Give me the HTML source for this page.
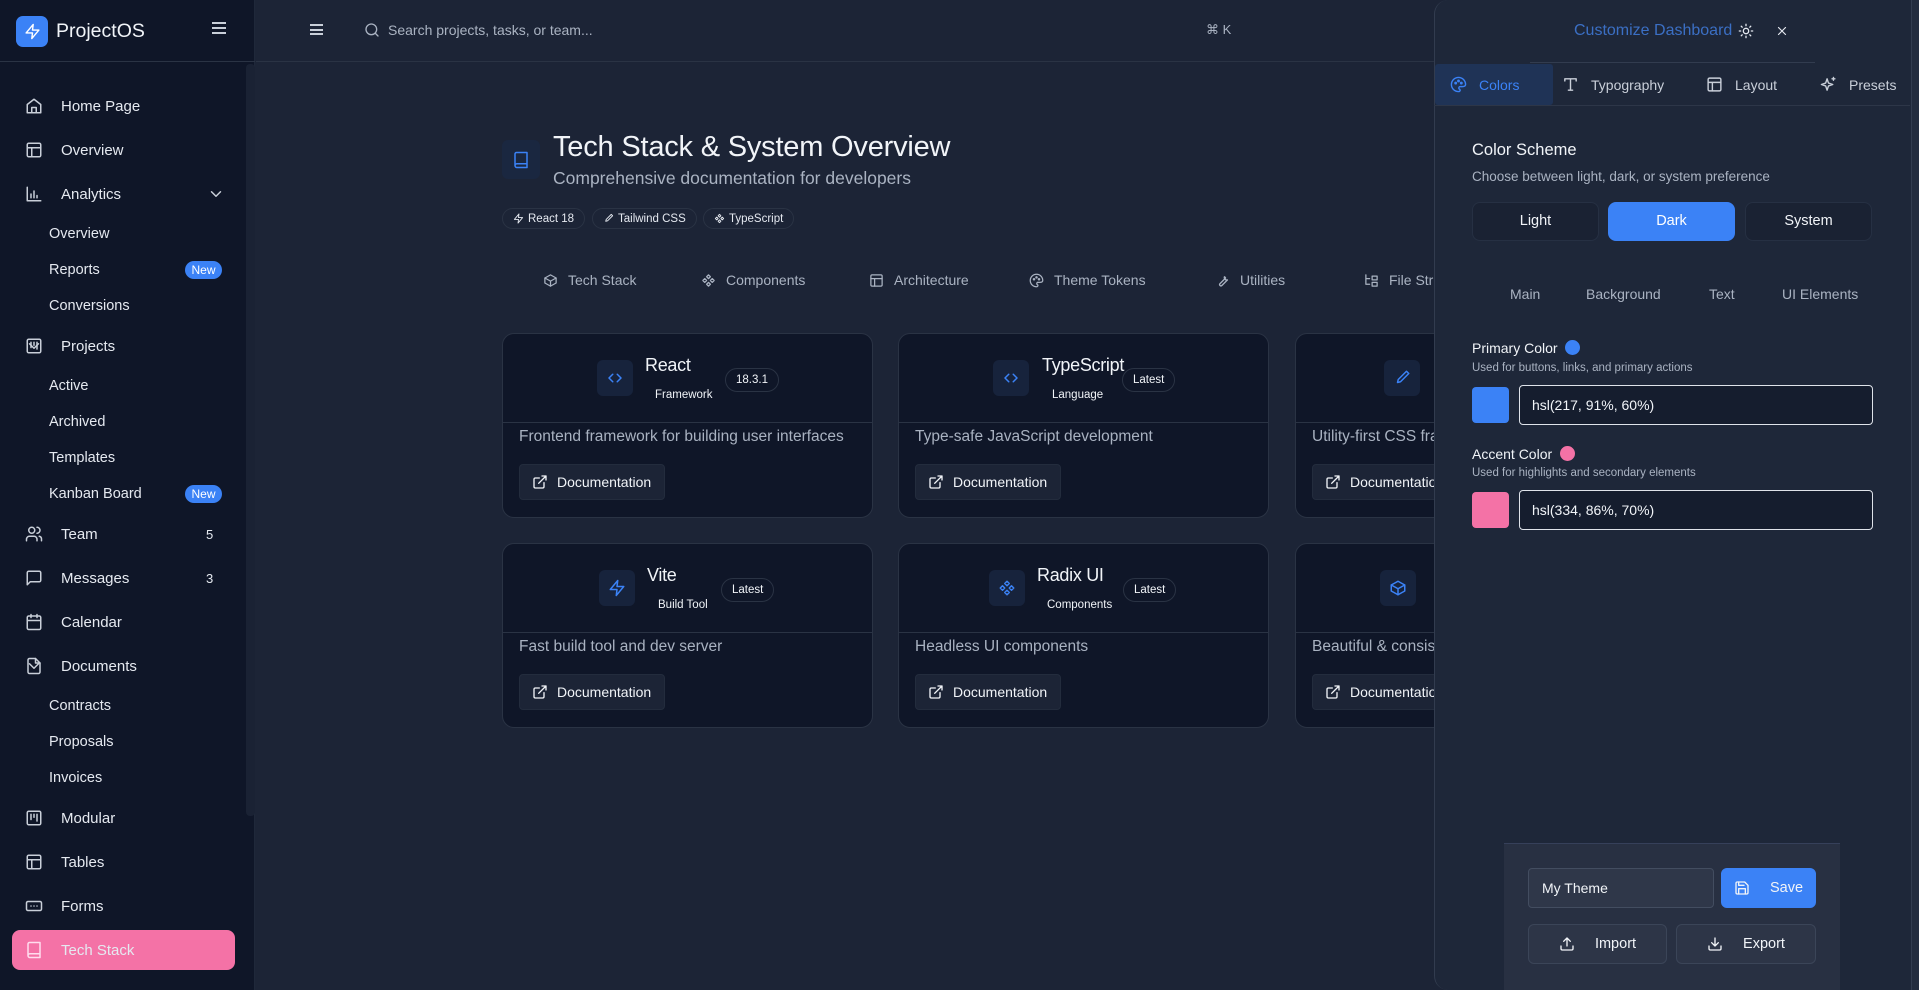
<!DOCTYPE html>
<html><head><meta charset="utf-8"><style>
*{box-sizing:border-box;margin:0;padding:0}
body{width:1919px;height:990px;overflow:hidden;background:#1c2436;font-family:"Liberation Sans",sans-serif;color:#e5e9f0;position:relative}
.a{position:absolute}
svg{fill:none;stroke:currentColor;stroke-width:2;stroke-linecap:round;stroke-linejoin:round}
.sb{left:0;top:0;width:255px;height:990px;background:#0f1628;border-right:1px solid #1f283a}
.ni{position:absolute;left:0;width:246px;height:40px;display:flex;align-items:center;font-size:15px;color:#e5e9f0}
.ni svg{position:absolute;left:25px;width:18px;height:18px;color:#c9cfd9}
.ni .l{position:absolute;left:61px}
.ni.sub .l{left:49px;font-size:14.5px}
.badge{position:absolute;left:185px;width:37px;height:18px;border-radius:9px;background:#3b82f6;color:#fff;font-size:12px;text-align:center;line-height:18px}
.cnt{position:absolute;left:206px;font-size:13px}
.chev{position:absolute;left:207px;width:14px;height:14px;color:#c9cfd9}
.card{position:absolute;width:371px;height:185px;background:#0f1628;border:1px solid #2a3344;border-radius:12px;overflow:hidden}
.card .hd{height:89px;border-bottom:1px solid #2a3344;position:relative}
.ib{position:absolute;width:36px;height:36px;border-radius:6px;background:#17233c;color:#3b82f6;display:flex;align-items:center;justify-content:center}
.ib svg{width:18px;height:18px}
.card .nm{position:absolute;font-size:18px;color:#f1f4f8;letter-spacing:-0.3px}
.card .ty{position:absolute;font-size:11.5px;color:#f1f4f8}
.card .ver{position:absolute;height:24px;padding:0 10px;border:1px solid #2a3344;border-radius:12px;font-size:11.5px;line-height:22px;color:#f1f4f8}
.card .ds{position:absolute;left:16px;top:94px;font-size:15.5px;color:#a9b2c1;white-space:nowrap}
.card .doc{position:absolute;left:16px;top:130px;height:36px;width:146px;background:#1c2436;border:1px solid #232c3d;border-radius:4px;font-size:14px;color:#f1f4f8;display:flex;align-items:center;padding-left:12px;white-space:nowrap}
.card .doc svg{width:16px;height:16px;margin-right:9px}
.tab{position:absolute;top:272px;font-size:14px;color:#aab3c2;display:flex;align-items:center}
.tab svg{width:15px;height:15px;margin-right:10px}
.pill{position:absolute;top:208px;height:21px;border:1px solid #2a3344;border-radius:11px;font-size:11.5px;color:#e5e9f0;display:flex;align-items:center;padding:0 10px;gap:4px}
.pill svg{width:11px;height:11px}
.pn{left:1434px;top:0;width:485px;height:990px;background:#1e2739;border-left:1px solid #323c4f;border-radius:14px 0 0 14px}
.ptab{position:absolute;top:64px;height:41px;display:flex;align-items:center;font-size:14px;color:#c9cfd9}
.ptab svg{width:17px;height:17px;margin-right:12px}
.btn3{position:absolute;top:202px;width:127px;height:39px;border:1px solid #263043;border-radius:8px;background:#1a2233;font-size:14.5px;text-align:center;line-height:37px;color:#f1f4f8}
.st{position:absolute;top:286px;font-size:14px;color:#aab3c2}
.inp{position:absolute;left:1519px;width:354px;height:40px;border:1px solid #dfe3ea;border-radius:4px;font-size:14px;line-height:38px;padding-left:12px;color:#f1f4f8;background:#151d2e}
.sw{position:absolute;left:1472px;width:37px;height:36px;border-radius:4px}
.ob{position:absolute;height:40px;border:1px solid #3b4558;border-radius:6px;background:#2d3547;font-size:14.5px;color:#f1f4f8;display:flex;align-items:center;justify-content:center}
.ob svg{width:16px;height:16px;margin-right:20px}
</style></head><body>

<div class="a sb">
  <div class="a" style="left:0;top:0;width:255px;height:62px;border-bottom:1px solid #2a3344"></div>
  <div class="a" style="left:16px;top:16px;width:32px;height:31px;border-radius:7px;background:#3b82f6;color:#fff;display:flex;align-items:center;justify-content:center"><svg style="width:17px;height:17px" viewBox="0 0 24 24"><path d="M13 2 3 14h9l-1 8 10-12h-9l1-8z"/></svg></div>
  <div class="a" style="left:56px;top:20px;font-size:19.5px;color:#f1f4f8">ProjectOS</div>
  <div class="a" style="left:212px;top:22px;width:14px;height:12px;border-top:2px solid #c9cfd9;border-bottom:2px solid #c9cfd9"><div style="margin-top:3px;border-top:2px solid #c9cfd9"></div></div>
  <div class="a" style="left:246px;top:64px;width:9px;height:752px;background:#1a2234;border-radius:4px"></div>

  <div class="ni" style="top:86px"><svg viewBox="0 0 24 24"><path d="M3 10 12 3l9 7v11H3z"/><path d="M9 21v-7h6v7"/></svg><span class="l">Home Page</span></div>
  <div class="ni" style="top:130px"><svg viewBox="0 0 24 24"><rect x="3" y="3" width="18" height="18" rx="2"/><path d="M3 9h18M9 21V9"/></svg><span class="l">Overview</span></div>
  <div class="ni" style="top:174px"><svg viewBox="0 0 24 24"><path d="M3 3v18h18M8 17v-5M12 17V8M16 17v-3"/></svg><span class="l">Analytics</span><svg class="chev" style="left:207px" viewBox="0 0 24 24"><path d="m6 9 6 6 6-6"/></svg></div>
  <div class="ni sub" style="top:214px"><span class="l">Overview</span></div>
  <div class="ni sub" style="top:250px"><span class="l">Reports</span><span class="badge">New</span></div>
  <div class="ni sub" style="top:286px"><span class="l">Conversions</span></div>
  <div class="ni" style="top:326px"><svg viewBox="0 0 24 24"><rect x="3" y="3" width="18" height="18" rx="2"/><path d="M8 7v7M12 7v4M16 7v9"/></svg><span class="l">Projects</span><svg class="chev" viewBox="0 0 24 24"><path d="m6 9 6 6 6-6"/></svg></div>
  <div class="ni sub" style="top:366px"><span class="l">Active</span></div>
  <div class="ni sub" style="top:402px"><span class="l">Archived</span></div>
  <div class="ni sub" style="top:438px"><span class="l">Templates</span></div>
  <div class="ni sub" style="top:474px"><span class="l">Kanban Board</span><span class="badge">New</span></div>
  <div class="ni" style="top:514px"><svg viewBox="0 0 24 24"><circle cx="9" cy="7" r="4"/><path d="M2 21v-2a4 4 0 0 1 4-4h6a4 4 0 0 1 4 4v2M16 3a4 4 0 0 1 0 8M22 21v-2a4 4 0 0 0-3-4"/></svg><span class="l">Team</span><span class="cnt">5</span></div>
  <div class="ni" style="top:558px"><svg viewBox="0 0 24 24"><path d="M21 15a2 2 0 0 1-2 2H7l-4 4V5a2 2 0 0 1 2-2h14a2 2 0 0 1 2 2z"/></svg><span class="l">Messages</span><span class="cnt">3</span></div>
  <div class="ni" style="top:602px"><svg viewBox="0 0 24 24"><rect x="3" y="4" width="18" height="18" rx="2"/><path d="M16 2v4M8 2v4M3 10h18"/></svg><span class="l">Calendar</span></div>
  <div class="ni" style="top:646px"><svg viewBox="0 0 24 24"><path d="M14 2H6a2 2 0 0 0-2 2v16a2 2 0 0 0 2 2h12a2 2 0 0 0 2-2V8z"/><path d="M14 2v6h6"/></svg><span class="l">Documents</span><svg class="chev" viewBox="0 0 24 24"><path d="m6 9 6 6 6-6"/></svg></div>
  <div class="ni sub" style="top:686px"><span class="l">Contracts</span></div>
  <div class="ni sub" style="top:722px"><span class="l">Proposals</span></div>
  <div class="ni sub" style="top:758px"><span class="l">Invoices</span></div>
  <div class="ni" style="top:798px"><svg viewBox="0 0 24 24"><rect x="3" y="3" width="18" height="18" rx="2"/><path d="M8 7v7M12 7v4M16 7v9"/></svg><span class="l">Modular</span></div>
  <div class="ni" style="top:842px"><svg viewBox="0 0 24 24"><rect x="3" y="3" width="18" height="18" rx="2"/><path d="M3 9h18M9 21V9"/></svg><span class="l">Tables</span></div>
  <div class="ni" style="top:886px"><svg viewBox="0 0 24 24"><rect x="2" y="6" width="20" height="12" rx="2"/><path d="M8 12h.01M12 12h.01M16 12h.01"/></svg><span class="l">Forms</span></div>
  <div class="a" style="left:12px;top:930px;width:223px;height:40px;border-radius:8px;background:#f472a6"></div>
  <div class="ni" style="top:930px"><svg viewBox="0 0 24 24" style="color:#fde"><path d="M4 19.5V4a2 2 0 0 1 2-2h14v20H6.5a2.5 2.5 0 0 1 0-5H20"/></svg><span class="l">Tech Stack</span></div>
</div>

<div class="a" style="left:256px;top:0;width:1180px;height:62px;border-bottom:1px solid #2a3344;background:#1c2436"></div>
<div class="a" style="left:310px;top:24px;width:13px;height:11px;border-top:2px solid #c9cfd9;border-bottom:2px solid #c9cfd9"><div style="margin-top:2.5px;border-top:2px solid #c9cfd9"></div></div>
<svg class="a" style="left:364px;top:22px;width:16px;height:16px;color:#aab3c2" viewBox="0 0 24 24"><circle cx="11" cy="11" r="8"/><path d="m21 21-4.3-4.3"/></svg>
<div class="a" style="left:388px;top:22px;font-size:14px;color:#aab3c2">Search projects, tasks, or team...</div>
<div class="a" style="left:1206px;top:22px;font-size:13px;color:#aab3c2">⌘ K</div>

<div class="ib" style="left:502px;top:140px;width:38px;height:39px;background:#1a2740"><svg viewBox="0 0 24 24"><path d="M4 19.5V4a2 2 0 0 1 2-2h14v20H6.5a2.5 2.5 0 0 1 0-5H20"/></svg></div>
<div class="a" style="left:553px;top:131px;font-size:29px;color:#f1f4f8;letter-spacing:-0.2px">Tech Stack &amp; System Overview</div>
<div class="a" style="left:553px;top:168px;font-size:17.5px;color:#aab3c2">Comprehensive documentation for developers</div>
<div class="pill" style="left:502px"><svg viewBox="0 0 24 24"><path d="M13 2 3 14h9l-1 8 10-12h-9l1-8z"/></svg>React 18</div>
<div class="pill" style="left:592px"><svg viewBox="0 0 24 24"><path d="M18 3l3 3-11 11-4 1 1-4z"/></svg>Tailwind CSS</div>
<div class="pill" style="left:703px"><svg viewBox="0 0 24 24"><path d="M12 3l3 3-3 3-3-3zM6 9l3 3-3 3-3-3zM18 9l3 3-3 3-3-3zM12 15l3 3-3 3-3-3z"/></svg>TypeScript</div>

<div class="tab" style="left:543px"><svg viewBox="0 0 24 24"><path d="M21 8 12 3 3 8v8l9 5 9-5z"/><path d="M3 8l9 5 9-5M12 13v8"/></svg>Tech Stack</div>
<div class="tab" style="left:701px"><svg viewBox="0 0 24 24"><path d="M12 3l3 3-3 3-3-3zM6 9l3 3-3 3-3-3zM18 9l3 3-3 3-3-3zM12 15l3 3-3 3-3-3z"/></svg>Components</div>
<div class="tab" style="left:869px"><svg viewBox="0 0 24 24"><rect x="3" y="3" width="18" height="18" rx="2"/><path d="M3 9h18M9 21V9"/></svg>Architecture</div>
<div class="tab" style="left:1029px"><svg viewBox="0 0 24 24"><path d="M12 22a10 10 0 1 1 10-10c0 3-3 3-5 3h-2a2 2 0 0 0-1 4 2 2 0 0 1-2 3z"/><circle cx="8" cy="10" r="1"/><circle cx="12" cy="7" r="1"/><circle cx="16" cy="10" r="1"/></svg>Theme Tokens</div>
<div class="tab" style="left:1215px"><svg viewBox="0 0 24 24"><path d="M15 6a4 4 0 0 0 5 5l-9 9a2 2 0 0 1-3-3l9-9a4 4 0 0 0-2-2z"/></svg>Utilities</div>
<div class="tab" style="left:1364px"><svg viewBox="0 0 24 24"><path d="M3 3v15h6M3 9h6M13 5h8v6h-8zM13 15h8v6h-8z"/></svg>File Structure</div>

<div class="card" style="left:502px;top:333px"><div class="hd">
<div class="ib" style="left:94px;top:26px"><svg viewBox="0 0 24 24"><path d="m9 7-5 5 5 5M15 7l5 5-5 5"/></svg></div>
<div class="nm" style="left:142px;top:21px">React</div><div class="ty" style="left:152px;top:55px">Framework</div><div class="ver" style="left:222px;top:34px">18.3.1</div></div>
<div class="ds">Frontend framework for building user interfaces</div><div class="doc"><svg viewBox="0 0 24 24"><path d="M15 3h6v6M10 14 21 3M18 13v6a2 2 0 0 1-2 2H5a2 2 0 0 1-2-2V8a2 2 0 0 1 2-2h6"/></svg>Documentation</div></div>

<div class="card" style="left:898px;top:333px"><div class="hd">
<div class="ib" style="left:94px;top:26px"><svg viewBox="0 0 24 24"><path d="m9 7-5 5 5 5M15 7l5 5-5 5"/></svg></div>
<div class="nm" style="left:143px;top:21px">TypeScript</div><div class="ty" style="left:153px;top:55px">Language</div><div class="ver" style="left:223px;top:34px">Latest</div></div>
<div class="ds">Type-safe JavaScript development</div><div class="doc"><svg viewBox="0 0 24 24"><path d="M15 3h6v6M10 14 21 3M18 13v6a2 2 0 0 1-2 2H5a2 2 0 0 1-2-2V8a2 2 0 0 1 2-2h6"/></svg>Documentation</div></div>

<div class="card" style="left:1295px;top:333px"><div class="hd">
<div class="ib" style="left:88px;top:26px"><svg viewBox="0 0 24 24"><path d="M18 3l3 3-11 11-4 1 1-4z"/></svg></div></div>
<div class="ds">Utility-first CSS framework</div><div class="doc"><svg viewBox="0 0 24 24"><path d="M15 3h6v6M10 14 21 3M18 13v6a2 2 0 0 1-2 2H5a2 2 0 0 1-2-2V8a2 2 0 0 1 2-2h6"/></svg>Documentation</div></div>

<div class="card" style="left:502px;top:543px"><div class="hd">
<div class="ib" style="left:96px;top:26px"><svg viewBox="0 0 24 24"><path d="M13 2 3 14h9l-1 8 10-12h-9l1-8z"/></svg></div>
<div class="nm" style="left:144px;top:21px">Vite</div><div class="ty" style="left:155px;top:55px">Build Tool</div><div class="ver" style="left:218px;top:34px">Latest</div></div>
<div class="ds">Fast build tool and dev server</div><div class="doc"><svg viewBox="0 0 24 24"><path d="M15 3h6v6M10 14 21 3M18 13v6a2 2 0 0 1-2 2H5a2 2 0 0 1-2-2V8a2 2 0 0 1 2-2h6"/></svg>Documentation</div></div>

<div class="card" style="left:898px;top:543px"><div class="hd">
<div class="ib" style="left:90px;top:26px"><svg viewBox="0 0 24 24"><path d="M12 3l3 3-3 3-3-3zM6 9l3 3-3 3-3-3zM18 9l3 3-3 3-3-3zM12 15l3 3-3 3-3-3z"/></svg></div>
<div class="nm" style="left:138px;top:21px">Radix UI</div><div class="ty" style="left:148px;top:55px">Components</div><div class="ver" style="left:224px;top:34px">Latest</div></div>
<div class="ds">Headless UI components</div><div class="doc"><svg viewBox="0 0 24 24"><path d="M15 3h6v6M10 14 21 3M18 13v6a2 2 0 0 1-2 2H5a2 2 0 0 1-2-2V8a2 2 0 0 1 2-2h6"/></svg>Documentation</div></div>

<div class="card" style="left:1295px;top:543px"><div class="hd">
<div class="ib" style="left:84px;top:26px"><svg viewBox="0 0 24 24"><path d="M21 8 12 3 3 8v8l9 5 9-5z"/><path d="M3 8l9 5 9-5M12 13v8"/></svg></div></div>
<div class="ds">Beautiful &amp; consistent icons</div><div class="doc"><svg viewBox="0 0 24 24"><path d="M15 3h6v6M10 14 21 3M18 13v6a2 2 0 0 1-2 2H5a2 2 0 0 1-2-2V8a2 2 0 0 1 2-2h6"/></svg>Documentation</div></div>

<div class="a pn">
  <div class="a" style="right:0;top:0;width:8px;height:990px;background:#232c3e;border-left:1px solid #323c4f"></div>
</div>
<div class="a" style="left:1574px;top:22px;font-size:16px;color:#3b6fc4">Customize Dashboard</div>
<svg class="a" style="left:1738px;top:23px;width:16px;height:16px;color:#e5e9f0" viewBox="0 0 24 24"><circle cx="12" cy="12" r="4"/><path d="M12 2v2M12 20v2M4.9 4.9l1.4 1.4M17.7 17.7l1.4 1.4M2 12h2M20 12h2M4.9 19.1l1.4-1.4M17.7 6.3l1.4-1.4"/></svg>
<svg class="a" style="left:1775px;top:24px;width:14px;height:14px;color:#e5e9f0" viewBox="0 0 24 24"><path d="M18 6 6 18M6 6l12 12"/></svg>
<div class="a" style="left:1530px;top:62px;width:285px;height:1px;background:#323c4f"></div>
<div class="a" style="left:1434px;top:105px;width:476px;height:1px;background:#2d3648"></div>
<div class="a" style="left:1435px;top:64px;width:118px;height:41px;background:#1f3356;border-radius:3px"></div>
<div class="ptab" style="left:1450px;color:#3b82f6"><svg viewBox="0 0 24 24"><path d="M12 22a10 10 0 1 1 10-10c0 3-3 3-5 3h-2a2 2 0 0 0-1 4 2 2 0 0 1-2 3z"/><circle cx="8" cy="10" r="1"/><circle cx="12" cy="7" r="1"/><circle cx="16" cy="10" r="1"/></svg>Colors</div>
<div class="ptab" style="left:1562px"><svg viewBox="0 0 24 24"><path d="M4 7V4h16v3M9 20h6M12 4v16"/></svg>Typography</div>
<div class="ptab" style="left:1706px"><svg viewBox="0 0 24 24"><rect x="3" y="3" width="18" height="18" rx="2"/><path d="M3 9h18M9 21V9"/></svg>Layout</div>
<div class="ptab" style="left:1820px"><svg viewBox="0 0 24 24"><path d="M10 4l2 6 6 2-6 2-2 6-2-6-6-2 6-2zM19 2v4M17 4h4"/></svg>Presets</div>

<div class="a" style="left:1472px;top:141px;font-size:16.5px;color:#f1f4f8">Color Scheme</div>
<div class="a" style="left:1472px;top:169px;font-size:13.5px;color:#aab3c2">Choose between light, dark, or system preference</div>
<div class="btn3" style="left:1472px">Light</div>
<div class="btn3" style="left:1608px;background:#3b82f6;border-color:#3b82f6;color:#fff">Dark</div>
<div class="btn3" style="left:1745px">System</div>
<div class="st" style="left:1510px">Main</div>
<div class="st" style="left:1586px">Background</div>
<div class="st" style="left:1709px">Text</div>
<div class="st" style="left:1782px">UI Elements</div>

<div class="a" style="left:1472px;top:340px;font-size:14px;color:#f1f4f8">Primary Color</div>
<div class="a" style="left:1565px;top:340px;width:15px;height:15px;border-radius:50%;background:#3b82f6"></div>
<div class="a" style="left:1472px;top:362px;font-size:11.5px;color:#aab3c2">Used for buttons, links, and primary actions</div>
<div class="sw" style="top:387px;background:#3b82f6"></div>
<div class="inp" style="top:385px">hsl(217, 91%, 60%)</div>

<div class="a" style="left:1472px;top:446px;font-size:14px;color:#f1f4f8">Accent Color</div>
<div class="a" style="left:1560px;top:446px;width:15px;height:15px;border-radius:50%;background:#f472a6"></div>
<div class="a" style="left:1472px;top:467px;font-size:11.5px;color:#aab3c2">Used for highlights and secondary elements</div>
<div class="sw" style="top:492px;background:#f472a6"></div>
<div class="inp" style="top:490px">hsl(334, 86%, 70%)</div>

<div class="a" style="left:1504px;top:843px;width:336px;height:147px;background:#283042;border-top:1px solid #36405a"></div>
<div class="a" style="left:1528px;top:868px;width:186px;height:40px;border:1px solid #434d60;border-radius:4px;background:#2f3749;font-size:14px;color:#f1f4f8;line-height:38px;padding-left:13px">My Theme</div>
<div class="ob" style="left:1721px;top:868px;width:95px;background:#3b82f6;border-color:#3b82f6"><svg viewBox="0 0 24 24"><path d="M19 21H5a2 2 0 0 1-2-2V5a2 2 0 0 1 2-2h11l5 5v11a2 2 0 0 1-2 2z"/><path d="M17 21v-8H7v8M7 3v5h8"/></svg>Save</div>
<div class="ob" style="left:1528px;top:924px;width:139px"><svg viewBox="0 0 24 24"><path d="M21 15v4a2 2 0 0 1-2 2H5a2 2 0 0 1-2-2v-4M17 8l-5-5-5 5M12 3v12"/></svg>Import</div>
<div class="ob" style="left:1676px;top:924px;width:140px"><svg viewBox="0 0 24 24"><path d="M21 15v4a2 2 0 0 1-2 2H5a2 2 0 0 1-2-2v-4M7 10l5 5 5-5M12 15V3"/></svg>Export</div>
</body></html>
